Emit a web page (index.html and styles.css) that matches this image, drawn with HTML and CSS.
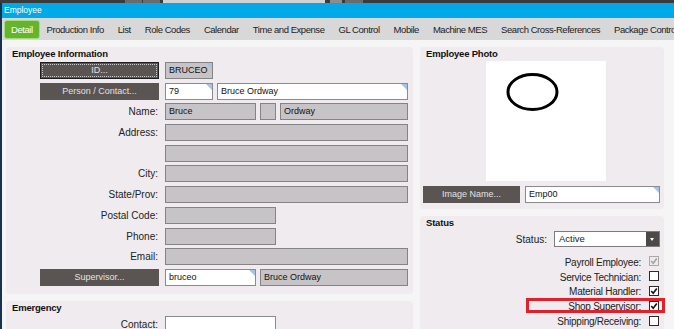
FILE: index.html
```html
<!DOCTYPE html>
<html lang="en">
<head>
  <meta charset="UTF-8" />
  <title>Employee</title>
  <link rel="stylesheet" href="styles.css">
</head>
<body>
<div class="chrome">
  <span class="blk b1"></span><span class="blk b2"></span><span class="blk b3"></span><span class="blk b4"></span><span class="blk b5"></span>
</div>
<div class="window">
  <div class="titlebar">Employee</div>

  <div class="tabs">
    <span class="tab active">Detail</span>
    <span class="tab">Production Info</span>
    <span class="tab">List</span>
    <span class="tab">Role Codes</span>
    <span class="tab">Calendar</span>
    <span class="tab">Time and Expense</span>
    <span class="tab">GL Control</span>
    <span class="tab">Mobile</span>
    <span class="tab">Machine MES</span>
    <span class="tab">Search Cross-References</span>
    <span class="tab">Package Control</span>
  </div>

  <div class="content">
    <div class="col left">
      <section class="panel">
        <h2>Employee Information</h2>
        <div class="form">
          <div class="row">
            <div class="btn focus">ID...</div>
            <div class="fields"><div class="field w48 tag">BRUCEO</div></div>
          </div>
          <div class="row">
            <div class="btn">Person / Contact...</div>
            <div class="fields">
              <div class="field white w48 tag">79</div>
              <div class="field white grow tag">Bruce Ordway</div>
            </div>
          </div>
          <div class="row">
            <div class="label">Name:</div>
            <div class="fields">
              <div class="field w91">Bruce</div>
              <div class="field w16"></div>
              <div class="field grow">Ordway</div>
            </div>
          </div>
          <div class="row">
            <div class="label">Address:</div>
            <div class="fields"><div class="field grow"></div></div>
          </div>
          <div class="row">
            <div class="label"></div>
            <div class="fields"><div class="field grow"></div></div>
          </div>
          <div class="row">
            <div class="label">City:</div>
            <div class="fields"><div class="field grow"></div></div>
          </div>
          <div class="row">
            <div class="label">State/Prov:</div>
            <div class="fields"><div class="field grow"></div></div>
          </div>
          <div class="row">
            <div class="label">Postal Code:</div>
            <div class="fields"><div class="field w111"></div></div>
          </div>
          <div class="row">
            <div class="label">Phone:</div>
            <div class="fields"><div class="field w111"></div></div>
          </div>
          <div class="row">
            <div class="label">Email:</div>
            <div class="fields"><div class="field grow"></div></div>
          </div>
          <div class="row">
            <div class="btn">Supervisor...</div>
            <div class="fields">
              <div class="field white w91 tag">bruceo</div>
              <div class="field grow">Bruce Ordway</div>
            </div>
          </div>
        </div>
      </section>

      <section class="panel">
        <h2>Emergency</h2>
        <div class="form">
          <div class="row">
            <div class="label">Contact:</div>
            <div class="fields"><div class="field white w111"></div></div>
          </div>
        </div>
      </section>
    </div>

    <div class="col right">
      <section class="panel photo-panel">
        <h2>Employee Photo</h2>
        <div class="photo">
          <svg width="120" height="120" viewBox="0 0 120 120">
            <ellipse cx="46.5" cy="31" rx="24.5" ry="17.5" fill="none" stroke="#000" stroke-width="3"/>
          </svg>
        </div>
        <div class="img-row">
          <div class="btn img-btn">Image Name...</div>
          <div class="field white grow tag">Emp00</div>
        </div>
      </section>

      <section class="panel status-panel">
        <h2>Status</h2>
        <div class="status-row">
          <span>Status:</span>
          <div class="select">
            <span class="select-text">Active</span>
            <span class="drop"></span>
          </div>
        </div>
        <div class="checks">
          <div class="check-row">
            <span>Payroll Employee:</span>
            <span class="box disabled"><svg viewBox="0 0 8 8"><path d="M1.2 4 L3.2 6.2 L6.8 1.4"/></svg></span>
          </div>
          <div class="check-row">
            <span>Service Technician:</span>
            <span class="box"></span>
          </div>
          <div class="check-row">
            <span>Material Handler:</span>
            <span class="box"><svg viewBox="0 0 8 8"><path d="M1.2 4 L3.2 6.2 L6.8 1.4"/></svg></span>
          </div>
          <div class="check-row">
            <span>Shop Supervisor:</span>
            <span class="box"><svg viewBox="0 0 8 8"><path d="M1.2 4 L3.2 6.2 L6.8 1.4"/></svg></span>
            <div class="highlight"></div>
          </div>
          <div class="check-row">
            <span>Shipping/Receiving:</span>
            <span class="box"></span>
          </div>
        </div>
      </section>
    </div>
  </div>
</div>
</body>
</html>
```

FILE: styles.css
```css
body {
  margin: 0;
  height: 329px;
  overflow: hidden;
  font-family: "Liberation Sans", Arial, sans-serif;
  background: #f6f5f6;
  color: #1c1c1c;
}

/* top window chrome */
.chrome {
  height: 3px;
  background: #3b3b3b;
  display: flex;
}
.blk {
  height: 3px;
  background: #6b6b6b;
}
.b1 { margin-left: 125px; width: 17px; }
.b2 { margin-left: 1px; width: 17px; }
.b3 { margin-left: 3px; width: 162px; background: #d2d2d2; }
.b4 { margin-left: 5px; width: 12px; background: #8c8c8c; }
.b5 { margin-left: 3px; width: 18px; }

.window {
  border-left: 2px solid #18324e;
  height: 326px;
}
.titlebar {
  height: 15px;
  background: #00a9e7;
  color: #fff;
  font-size: 8.5px;
  line-height: 15px;
  padding-left: 2px;
}

.tabs {
  height: 22px;
  background: #d8d8d8;
  display: flex;
  align-items: center;
  padding-left: 2px;
  font-size: 9.5px;
  letter-spacing: -0.45px;
  white-space: nowrap;
  overflow: hidden;
}
.tab {
  padding: 0 7px;
}
.tab.active {
  height: 19px;
  line-height: 17px;
  box-sizing: border-box;
  padding: 0 6px;
  background: #62b52d;
  border: 1px solid #a7d97f;
  border-radius: 3px;
  color: #fff;
}

.content {
  display: flex;
  gap: 7px;
  padding: 7px 0 0 4px;
}
.col {
  display: flex;
  flex-direction: column;
  gap: 7px;
}
.col.left { width: 407px; }
.col.right { width: 244px; }

.panel {
  background: #efebef;
  border-radius: 4px;
}
.panel h2 {
  margin: 0 0 2px;
  padding-left: 6px;
  font-size: 9.5px;
  letter-spacing: -0.2px;
  line-height: 13px;
  color: #111;
}

.form {
  display: flex;
  flex-direction: column;
  gap: 3.7px;
  padding: 0 5px 8px 0;
}
.row {
  display: grid;
  grid-template-columns: 153px 243px;
  column-gap: 6px;
  height: 17px;
}
.label {
  text-align: right;
  font-size: 10px;
  line-height: 17px;
  padding-right: 1px;
  color: #222;
}
.btn {
  margin-left: 34px;
  height: 17px;
  background: #5a5552;
  color: #e2e2e2;
  font-size: 9px;
  text-align: center;
  line-height: 17px;
  box-sizing: border-box;
}
.btn.focus {
  border: 1px solid #1e1e1e;
  line-height: 15px;
  outline: 1px dotted #c9c9c9;
  outline-offset: -3px;
}

.fields {
  display: flex;
  gap: 4px;
}
.field {
  position: relative;
  height: 17px;
  box-sizing: border-box;
  border: 1px solid #858385;
  background: #c6c4c7;
  font-size: 9px;
  line-height: 15px;
  padding: 0 3px;
  color: #111;
  white-space: nowrap;
}
.field.white {
  background: #fff;
  border-color: #8c8a8c;
}
.w48 { width: 48px; }
.w91 { width: 91px; }
.w16 { width: 16px; }
.w111 { width: 111px; }
.grow { flex: 1; }
.field.tag::after {
  content: "";
  position: absolute;
  top: 0;
  right: 0;
  border-style: solid;
  border-width: 0 6px 6px 0;
  border-color: transparent #a8c2e2 transparent transparent;
}

/* photo */
.photo-panel h2 { margin-bottom: 1px; }
.photo {
  width: 120px;
  height: 120px;
  background: #fff;
  margin-left: 66px;
}
.photo svg { display: block; }
.img-row {
  display: flex;
  gap: 5px;
  margin-top: 5px;
  padding: 0 4px 6px 3px;
}
.btn.img-btn {
  margin-left: 0;
  width: 97px;
}

/* status */
.status-panel { flex: 1; }
.status-row {
  display: flex;
  justify-content: flex-end;
  align-items: center;
  gap: 7px;
  height: 16px;
  margin-top: 2px;
  padding-right: 4px;
  font-size: 10px;
}
.select {
  width: 106px;
  height: 16px;
  box-sizing: border-box;
  border: 1px solid #7d7b7d;
  background: #fff;
  display: flex;
}
.select-text {
  padding-left: 4px;
  font-size: 9.5px;
  line-height: 14px;
}
.drop {
  position: relative;
  width: 13px;
  margin-left: auto;
  background: #4d4946;
}
.drop::after {
  content: "";
  position: absolute;
  left: 4px;
  top: 6px;
  border-style: solid;
  border-width: 3px 2.5px 0 2.5px;
  border-color: #fff transparent transparent transparent;
}

.checks {
  margin-top: 7px;
}
.check-row {
  position: relative;
  height: 14.8px;
  display: flex;
  justify-content: flex-end;
  align-items: center;
  gap: 8px;
  padding-right: 5px;
  font-size: 10px;
  letter-spacing: -0.25px;
  color: #222;
}
.check-row span:first-child {
  padding-top: 2px;
}
.box {
  width: 10px;
  height: 10px;
  box-sizing: border-box;
  border: 1px solid #2a2a2a;
  background: #fff;
}
.box svg {
  display: block;
  width: 8px;
  height: 8px;
}
.box path {
  fill: none;
  stroke: #111;
  stroke-width: 1.6;
}
.box.disabled {
  border-color: #a9a9a9;
  background: #ebebeb;
}
.box.disabled path { stroke: #a3a3a3; }

.highlight {
  position: absolute;
  left: 106px;
  right: -1px;
  top: 0;
  bottom: 0;
  border: 3px solid #e3202a;
}
```
